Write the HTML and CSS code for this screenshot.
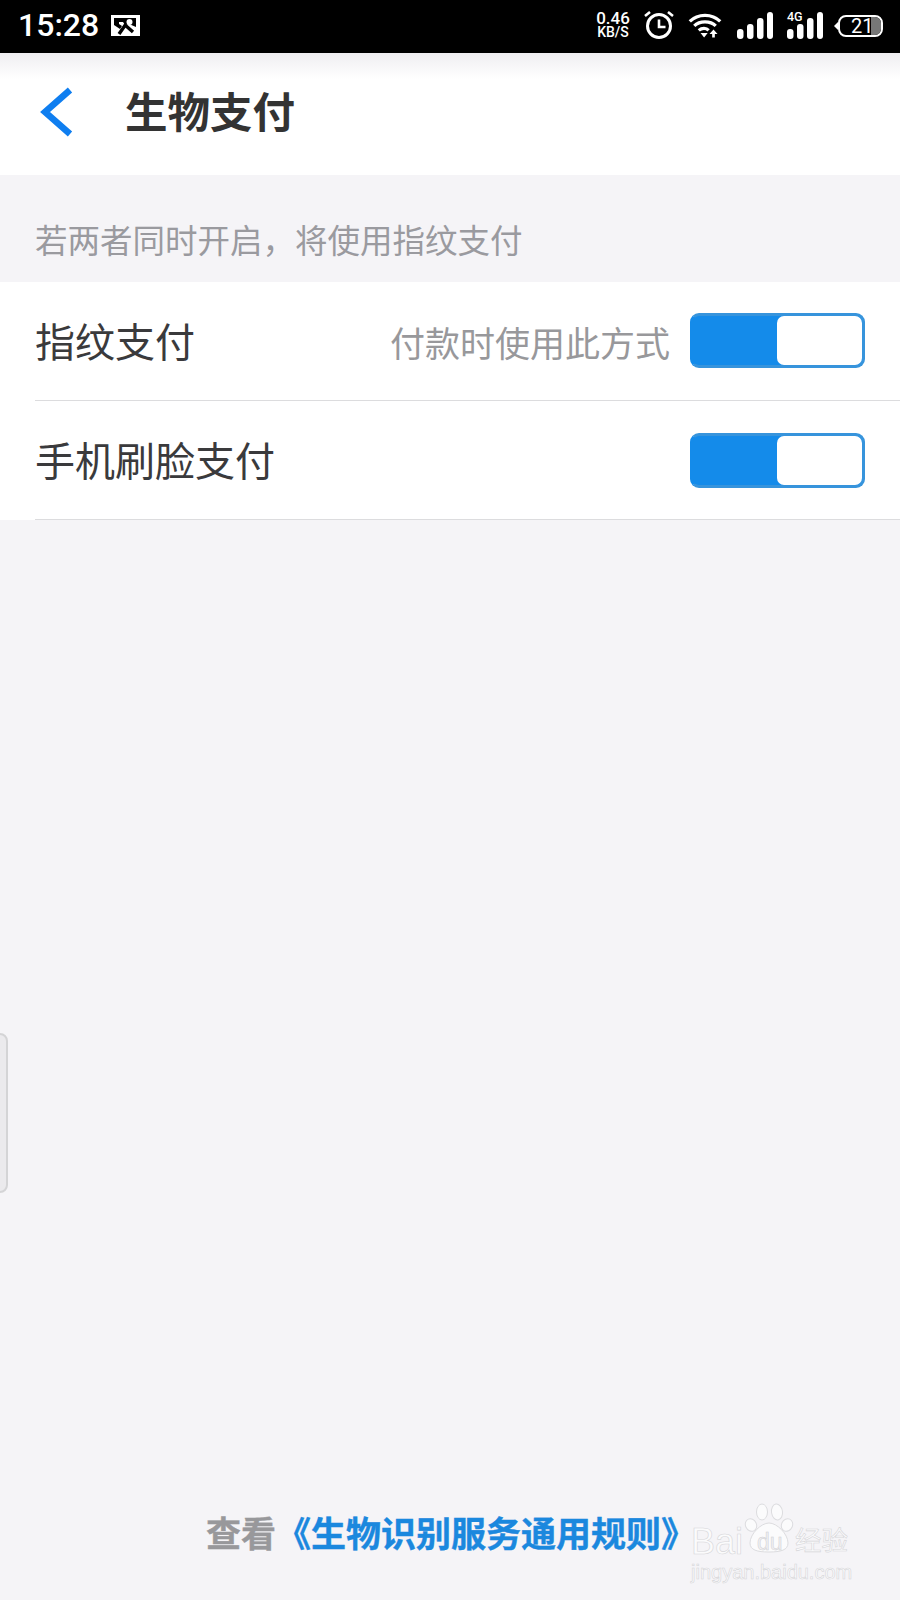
FILE: index.html
```html
<!DOCTYPE html>
<html lang="zh-CN">
<head>
<meta charset="UTF-8">
<meta name="viewport" content="width=device-width, initial-scale=1.0">
<title>生物支付</title>
<link rel="stylesheet" href="styles.css">
</head>
<body>

<div class="page">
  <div class="status-bar">
    <div class="status-left">
      <span class="clock">15:28</span>
      <svg class="pic-icon" width="29" height="21" viewBox="0 0 29 21">
        <path fill="#fff" d="M0 0h29v21H0z"/>
        <path fill="#000" d="M3 3h22v9l-7-3-4 1-2-3H8v2l3 2-2 3-6-4z"/>
        <circle cx="18.500" cy="7" r="3" fill="#fff"/>
        <path fill="none" stroke="#000" stroke-width="3.400" d="M15 9L8 19M14 10l8 7"/>
      </svg>
    </div>
    <div class="status-right">
      <div class="speed"><span>0.46</span><span>KB/S</span></div>
      <svg class="alarm" width="30" height="28" viewBox="1 0 30 28" fill="none" stroke="#fff">
        <circle cx="16" cy="15" r="11.500" stroke-width="3"/>
        <path stroke-width="2.600" d="M16 8.500v7.500h6.500"/>
        <path stroke-width="2.600" d="M2 5l5-4M30 5l-5-4"/>
      </svg>
      <svg class="wifi" width="34" height="28" viewBox="0 0 38 30" fill="none" stroke="#fff" stroke-width="3.600">
        <path d="M2 11c9-9 25-9 34 0M7 16c6-6 18-6 24 0M12 21c3.500-3 8.500-3 11 0"/>
        <path fill="#fff" stroke="none" d="M14 24h8l-4 5zM27 29v-4h-3l4.500-5 4.500 5h-3v4z"/>
      </svg>
      <svg class="signal" width="36" height="27" viewBox="0 0 36 27" fill="#fff">
        <rect x="0" y="17" width="6.500" height="10" rx="3"/>
        <rect x="10" y="12" width="6.500" height="15" rx="3"/>
        <rect x="20" y="6" width="6.500" height="21" rx="3"/>
        <rect x="30" y="0" width="6" height="27" rx="3"/>
      </svg>
      <div class="signal-4g">
        <span class="tag-4g">4G</span>
        <svg width="36" height="27" viewBox="0 0 36 27" fill="#fff">
          <rect x="0" y="17" width="6.500" height="10" rx="3"/>
          <rect x="10" y="12" width="6.500" height="15" rx="3"/>
          <rect x="20" y="6" width="6.500" height="21" rx="3"/>
          <rect x="30" y="0" width="6" height="27" rx="3"/>
        </svg>
      </div>
      <div class="battery">
        <div class="battery-body">
          <span class="battery-num">21</span>
          <span class="battery-level"></span>
        </div>
      </div>
    </div>
  </div>

  <div class="header">
    <svg class="back" width="33" height="50" viewBox="0 0 33 50" fill="none" stroke="#0f7ef0" stroke-width="6.500">
      <path d="M30 3L5 25l25 22"/>
    </svg>
    <h1 class="title">生物支付</h1>
  </div>

  <div class="hint">若两者同时开启，将使用指纹支付</div>

  <div class="list">
    <div class="row">
      <span class="row-label">指纹支付</span>
      <span class="row-desc">付款时使用此方式</span>
      <div class="switch"><span class="knob"></span></div>
    </div>
    <div class="row">
      <span class="row-label">手机刷脸支付</span>
      <div class="switch"><span class="knob"></span></div>
    </div>
  </div>

  <div class="spacer"></div>

  <div class="footer">
    <span class="footer-gray">查看</span><span class="footer-link">《生物识别服务通用规则》</span>
  </div>

  <div class="edge-handle"></div>

  <div class="watermark">
    <span class="wm-bai">Bai</span>
    <svg class="wm-paw" width="50" height="50" viewBox="0 0 50 50" fill="#fbfbfc" stroke="#dcdcdf" stroke-width="1">
      <ellipse cx="7" cy="22" rx="5.500" ry="6.500" transform="rotate(-25 7 22)"/>
      <ellipse cx="18" cy="9" rx="5.500" ry="8"/>
      <ellipse cx="33" cy="9" rx="5.500" ry="8" transform="rotate(-8 33 9)"/>
      <ellipse cx="43" cy="22" rx="5.500" ry="6.500" transform="rotate(25 43 22)"/>
      <path d="M25 20c8 0 19 11 19 20 0 7-7 9-19 9S6 47 6 40c0-9 11-20 19-20z"/>
    </svg>
    <span class="wm-du">du</span>
    <span class="wm-cn">经验</span>
    <span class="wm-url">jingyan.baidu.com</span>
  </div>
</div>

</body>
</html>
```

FILE: styles.css
```css
* {
  box-sizing: border-box;
}

body {
  margin: 0;
  font-family: "Roboto", "Noto Sans CJK SC", sans-serif;
}

.page {
  position: relative;
  width: 900px;
  height: 1600px;
  display: flex;
  flex-direction: column;
  overflow: hidden;
  background-color: #f5f4f7;
}

/* status bar */
.status-bar {
  height: 53px;
  background-color: #000;
  color: #fff;
  display: flex;
  align-items: center;
  justify-content: space-between;
  padding: 0 17px 3px 18px;
}

.status-left {
  display: flex;
  align-items: center;
  gap: 12px;
}

.clock {
  font-size: 32px;
  font-weight: 500;
  line-height: 40px;
}

.pic-icon {
  display: block;
}

.status-right {
  display: flex;
  align-items: center;
}

.speed {
  display: flex;
  flex-direction: column;
  align-items: center;
  width: 36px;
  margin-right: 13px;
  font-size: 14px;
  font-weight: 500;
  line-height: 13px;
}

.speed span:first-child {
  font-size: 17px;
  line-height: 15px;
}

.alarm {
  display: block;
  margin-right: 14px;
}

.wifi {
  display: block;
  margin-right: 15px;
}

.signal {
  display: block;
  margin-right: 14px;
}

.signal-4g {
  position: relative;
  margin-right: 11px;
}

.tag-4g {
  position: absolute;
  left: 0;
  top: -1px;
  font-size: 12.500px;
  font-weight: 500;
  line-height: 12px;
}

.signal-4g svg {
  display: block;
}

.battery {
  position: relative;
  margin-top: 2px;
  padding-left: 4px;
}

.battery::before {
  content: "";
  position: absolute;
  left: 0;
  top: 7px;
  border-style: solid;
  border-width: 4px 4px 4px 0;
  border-color: transparent #fff transparent transparent;
}

.battery-body {
  position: relative;
  width: 45px;
  height: 22px;
  border: 2px solid #fff;
  border-radius: 8px;
  overflow: hidden;
  display: flex;
  align-items: center;
  padding-left: 11px;
  font-size: 20px;
}

.battery-num {
  line-height: 18px;
}

.battery-level {
  position: absolute;
  top: 0;
  right: 0;
  width: 10px;
  height: 18px;
  background-color: #777;
}

/* header */
.header {
  height: 122px;
  display: flex;
  align-items: center;
  padding: 0 0 5px 40px;
  background: linear-gradient(#efeef1, #fff 26px);
}

.back {
  display: block;
}

.title {
  margin: 4px 0 0 52px;
  font-size: 42.500px;
  font-weight: 700;
  line-height: 60px;
  color: #333;
}

/* list */
.hint {
  height: 107px;
  padding: 45px 0 0 35px;
  font-size: 32.500px;
  line-height: 44px;
  color: #9a9a9f;
}

.list {
  background-color: #fff;
}

.row {
  height: 119px;
  margin-left: 35px;
  padding: 0 35px 0 0;
  display: flex;
  align-items: center;
  border-bottom: 1px solid #dcdcde;
}

.row-label {
  margin-top: -3px;
  font-size: 40px;
  color: #3a3a3c;
}

.row-desc {
  margin-left: auto;
  font-size: 35px;
  color: #98989b;
}

.switch {
  margin: -1px 0 0 20px;
  width: 175px;
  height: 55px;
  display: flex;
  justify-content: flex-end;
  border: 3px solid #3794dc;
  border-left-color: #148bea;
  border-radius: 9px;
  background-color: #148bea;
}

.row-label + .switch {
  margin: 0 0 0 auto;
}

.knob {
  width: 85px;
  height: 49px;
  border-radius: 7px;
  background-color: #fff;
}

.spacer {
  flex: 1;
}

/* footer */
.footer {
  height: 89px;
  padding-left: 206px;
  font-size: 35px;
  font-weight: 700;
  line-height: 50px;
  white-space: nowrap;
  -webkit-text-stroke: 0.4px currentColor;
}

.footer-gray {
  color: #98989b;
}

.footer-link {
  color: #1b88de;
}

/* overlays */
.edge-handle {
  position: absolute;
  left: -10px;
  top: 1033px;
  width: 18px;
  height: 160px;
  border: 2px solid #d4d4d6;
  border-radius: 8px;
  background-color: #ebeaed;
}

.watermark {
  position: absolute;
  left: 691px;
  top: 1503px;
  width: 162px;
  height: 80px;
  color: #fbfbfc;
  -webkit-text-stroke: 0.6px #d6d6d9;
}

.watermark span {
  position: absolute;
  white-space: nowrap;
}

.wm-bai {
  left: 0;
  top: 19px;
  font-family: "Liberation Sans", sans-serif;
  font-size: 36px;
  line-height: 40px;
}

.wm-paw {
  position: absolute;
  left: 53px;
  top: 0;
}

.wm-du {
  left: 66px;
  top: 27px;
  font-family: "Liberation Sans", sans-serif;
  font-size: 23px;
  line-height: 24px;
  color: #f0f0f2;
  -webkit-text-stroke: 0.5px #cfcfd2;
}

.wm-cn {
  left: 104px;
  top: 21px;
  font-size: 26.500px;
  line-height: 34px;
}

.wm-url {
  left: 0;
  top: 57px;
  font-family: "Liberation Sans", sans-serif;
  font-size: 20px;
  line-height: 24px;
}
```
